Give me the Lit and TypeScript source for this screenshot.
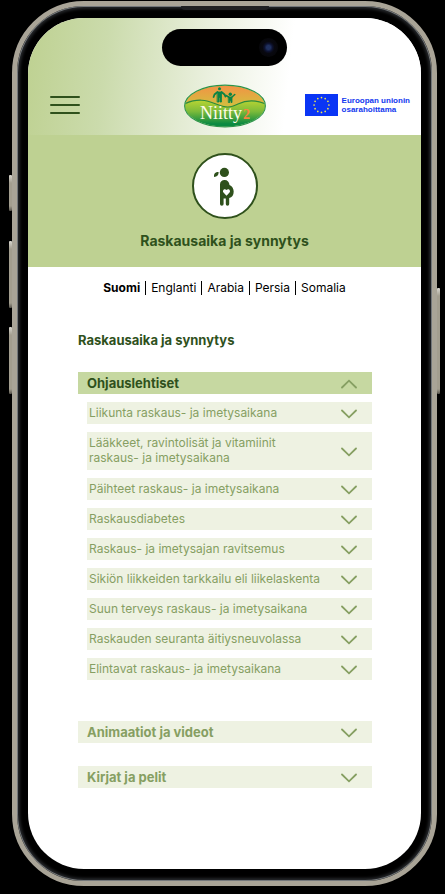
import { LitElement, html, css, svg } from "lit";
import { customElement, property, state } from "lit/decorators.js";
import { classMap } from "lit/directives/class-map.js";

@customElement("chevron-icon")
class ChevronIcon extends LitElement {
  @property({ type: Boolean }) up = false;

  static styles = css`
    :host { display: block; flex: none; width: 16px; height: 10px; }
    svg { display: block; }
    .up { transform: rotate(180deg); }
  `;

  render() {
    return html`<svg class=${classMap({ up: this.up })} width="16" height="10" viewBox="0 0 16 10" aria-hidden="true">
      <path d="M1 1.5 L8 8.3 L15 1.5" fill="none" stroke="#869f62" stroke-width="1.8" stroke-linecap="round" />
    </svg>`;
  }
}

@customElement("niitty-logo")
class NiittyLogo extends LitElement {
  static styles = css`
    :host { display: block; padding-top: 2px; }
    svg { display: block; }
    .name { font: 18px "Liberation Serif", serif; fill: #fdfbe6; }
    .two { font: bold 14px "Liberation Serif", serif; fill: #fa8540; }
  `;

  render() {
    return html`<svg width="82" height="44" viewBox="0 0 82 44" role="img" aria-label="Niitty2">
      <defs>
        <linearGradient id="sky" x1="0" y1="0" x2="0" y2="1">
          <stop offset="0" stop-color="#f58f45" />
          <stop offset="0.55" stop-color="#d9b640" />
          <stop offset="1" stop-color="#c5cf3c" />
        </linearGradient>
        <linearGradient id="grass" x1="0" y1="0" x2="0" y2="1">
          <stop offset="0" stop-color="#b9d433" />
          <stop offset="0.4" stop-color="#7dbb3a" />
          <stop offset="0.85" stop-color="#0b8a41" />
        </linearGradient>
        <clipPath id="oval"><ellipse cx="41" cy="22" rx="40" ry="20.5" /></clipPath>
      </defs>
      <g clip-path="url(#oval)">
        <rect width="82" height="32" fill="url(#sky)" />
        <path d="M0 20 C14 14 22 16 32 20 S46 24 54 20 S70 15 82 20 V44 H0 Z" fill="url(#grass)" />
        <path d="M0 20 C14 14 22 16 32 20 S46 24 54 20 S70 15 82 20" fill="none" stroke="#2c8a3c" stroke-width="1.2" />
      </g>
      <ellipse cx="41" cy="22" rx="40.4" ry="20.9" fill="none" stroke="#2d9448" stroke-width="1.1" />
      <g fill="#0c8444" stroke="#0c8444" stroke-linecap="round" stroke-linejoin="round">
        <circle cx="35.5" cy="4.8" r="1.5" stroke="none" />
        <path d="M33.5 8 H37.5 V18 H36 V13.5 H35 V18 H33.5 Z" stroke-width="0.8" />
        <path d="M33.5 8 L30.5 10.5 L29.6 13 M37.5 8 L40.5 10.5 L41.5 12.5" fill="none" stroke-width="1.8" />
        <circle cx="46.3" cy="10.2" r="1.7" stroke="none" />
        <path d="M44.7 13 H48 V18.5 H47 V16.5 H45.8 V18.5 H44.7 Z" stroke-width="0.8" />
        <path d="M44.7 13 L42 11.5 M48 13 L50.8 10.5" fill="none" stroke-width="1.5" />
      </g>
      <text class="name" x="16" y="35">Niitty</text>
      <text class="two" x="59" y="35">2</text>
    </svg>`;
  }
}

@customElement("eu-funding")
class EuFunding extends LitElement {
  static styles = css`
    :host {
      display: flex; align-items: center; gap: 4px;
      color: #1238ef; font: bold 8px/9px "Liberation Sans", Arial, sans-serif;
    }
    svg { display: block; flex: none; }
    .words { white-space: nowrap; }
  `;

  render() {
    const stars = Array.from({ length: 12 }, (_, i) => {
      const a = (i * Math.PI) / 6;
      return svg`<circle cx=${16.5 + 7.4 * Math.sin(a)} cy=${11 - 7.4 * Math.cos(a)} r="0.85" fill="#f2e94e" />`;
    });
    return html`<svg width="33" height="22" viewBox="0 0 33 22" aria-hidden="true">
        <rect width="33" height="22" fill="#0a35f5" />${stars}
      </svg>
      <span class="words">Euroopan unionin<br />osarahoittama</span>`;
  }
}

@customElement("app-root")
class AppRoot extends LitElement {
  @state() private open = "Ohjauslehtiset";

  private languages = ["Suomi", "Englanti", "Arabia", "Persia", "Somalia"];

  private sections = [
    {
      name: "Ohjauslehtiset",
      items: [
        "Liikunta raskaus- ja imetysaikana",
        "Lääkkeet, ravintolisät ja vitamiinit raskaus- ja imetysaikana",
        "Päihteet raskaus- ja imetysaikana",
        "Raskausdiabetes",
        "Raskaus- ja imetysajan ravitsemus",
        "Sikiön liikkeiden tarkkailu eli liikelaskenta",
        "Suun terveys raskaus- ja imetysaikana",
        "Raskauden seuranta äitiysneuvolassa",
        "Elintavat raskaus- ja imetysaikana",
      ],
    },
    { name: "Animaatiot ja videot", items: [] as string[] },
    { name: "Kirjat ja pelit", items: [] as string[] },
  ];

  static styles = css`
    * { box-sizing: border-box; }
    :host {
      display: block; min-height: 100vh; box-sizing: border-box;
      padding: 1px 8px 7px 12px; background: #000;
      font-family: Inter, "Noto Sans", sans-serif; color: #000;
    }
    button { border: 0; margin: 0; font: inherit; color: inherit; cursor: pointer; text-align: left; }
    h1, h2, h3, ul { margin: 0; padding: 0; }
    ul { list-style: none; }
    a { color: inherit; text-decoration: none; }

    .device {
      position: relative; padding: 12px 11px; border-radius: 72px; background: #000;
      border: 5px solid #a9a497;
      box-shadow: inset 0 0 0 1px #73777a, inset 0 0 3px 3px #25272a;
    }
    .side {
      position: absolute; width: 3px; border-radius: 1px;
      background: linear-gradient(#d9d7d0, #a39e8f 8px, #a39e8f calc(100% - 5px), #55524a);
    }
    .left { left: -8px; }
    .right { right: -8px; }
    .action { top: 169px; height: 36px; }
    .louder { top: 235px; height: 67px; }
    .quieter { top: 321px; height: 67px; }
    .power { top: 282px; height: 106px; }
    .earpiece {
      position: absolute; top: 0; left: 50%; width: 88px; height: 4px; margin-left: -44px;
      background: #202123; border-radius: 0 0 4px 4px;
    }
    .island {
      position: absolute; top: 23px; left: 50%; width: 125px; height: 37px; margin-left: -63px;
      border-radius: 20px; background: #000;
      display: flex; justify-content: flex-end; align-items: center; padding-right: 9px;
    }
    .lens {
      width: 19px; height: 19px; border-radius: 50%;
      background: radial-gradient(circle, #20305f 0 2px, #0d1230 4px, #08080f 6px, #07070b 9px);
    }
    .screen { border-radius: 56px; overflow: hidden; background: #fff; padding-bottom: 81px; }

    .top {
      display: grid; grid-template-columns: 1fr auto 1fr; align-items: center;
      height: 117px; padding: 56px 11px 0;
      background: linear-gradient(96deg, #bed191 0, #cbdbac 20%, #eaf0de 46%, #fff 66%);
    }
    .menu {
      display: flex; flex-direction: column; gap: 6px; width: 41px; padding: 0 0 0 11px; background: none;
    }
    .bar { height: 2px; border-radius: 1px; background: #2f511c; }
    .eu { justify-self: end; }

    .hero {
      display: flex; flex-direction: column; align-items: center; gap: 12px;
      padding: 18px 16px 16px; background: #bed192;
    }
    .badge { display: block; }
    .hero-title { font-size: 14px; line-height: 20px; font-weight: 700; color: #2f511c; }

    .languages {
      display: flex; justify-content: center; align-items: center; gap: 5px;
      padding-top: 12px; font-size: 12px; line-height: 18px;
    }
    .languages li { display: flex; align-items: center; gap: 5px; }
    .languages li + li::before { content: ""; width: 1px; height: 14px; background: #000; }
    .current { font-weight: 700; }

    .content { padding: 34px 49px 0 50px; }
    .title { font-size: 13px; line-height: 18px; font-weight: 700; color: #2f511c; margin-bottom: 23px; }
    .section + .section { margin-top: 23px; }
    .section.open + .section { margin-top: 41px; }
    .head, .item {
      display: flex; justify-content: space-between; align-items: center; width: 100%;
      min-height: 22px; background: #eef2e2; color: #869f62; line-height: 15px;
    }
    .head { padding: 1px 15px 0 9px; font-size: 13px; font-weight: 700; }
    .section.open .head { background: #c6d8a1; color: #2f511c; }
    .items { display: grid; gap: 8px; padding: 8px 0 0 9px; }
    .item { padding: 0 15px 2px 2px; font-size: 12px; }
    .item chevron-icon { margin-top: 4px; }
    .label { max-width: 234px; }
    .item.long { min-height: 38px; }
    .item.long .label { max-width: 200px; }
  `;

  private toggle(name: string) {
    this.open = this.open === name ? "" : name;
  }

  render() {
    return html`
      <div class="device">
        <div class="earpiece"></div>
        <div class="side left action"></div>
        <div class="side left louder"></div>
        <div class="side left quieter"></div>
        <div class="side right power"></div>
        <div class="island"><div class="lens"></div></div>
        <div class="screen">
          <header class="top">
            <button class="menu" aria-label="Valikko">
              <span class="bar"></span><span class="bar"></span><span class="bar"></span>
            </button>
            <niitty-logo></niitty-logo>
            <eu-funding class="eu"></eu-funding>
          </header>

          <section class="hero">
            <svg class="badge" width="66" height="66" viewBox="0 0 66 66" aria-hidden="true">
              <circle cx="33" cy="33" r="32" fill="#fff" stroke="#2f511c" stroke-width="2" />
              <g fill="#2f511c">
                <circle cx="32.4" cy="19.4" r="4.6" />
                <path d="M22 23.9 C21.6 21 23.2 19 26.6 19 C26.8 22 25.3 23.8 22 23.9 Z" />
                <path d="M28 31.5 C28 28.5 30 27 32.6 27 C35.5 27 37.3 29 37.5 32 C40 33 41.7 35.6 41.7 38.6 C41.7 42.2 40 44.6 37.2 45 V51 A1.7 1.7 0 0 1 33.8 51 V45.4 H31.6 V51 A1.8 1.8 0 0 1 28 51 Z" />
              </g>
              <path d="M34.5 42.7 L31.5 39.6 C29.8 37.5 32.5 34.8 34.5 37 C36.5 34.8 39.2 37.5 37.5 39.6 Z" fill="#fff" />
            </svg>
            <h1 class="hero-title">Raskausaika ja synnytys</h1>
          </section>

          <nav aria-label="Kieli">
            <ul class="languages">
              ${this.languages.map(
                (l, i) => html`<li><a href="#" class=${classMap({ current: i === 0 })}>${l}</a></li>`
              )}
            </ul>
          </nav>

          <main class="content">
            <h2 class="title">Raskausaika ja synnytys</h2>
            ${this.sections.map((s) => {
              const open = s.name === this.open;
              return html`<section class=${classMap({ section: true, open })}>
                <h3>
                  <button class="head" aria-expanded=${open} @click=${() => this.toggle(s.name)}>
                    ${s.name}<chevron-icon ?up=${open}></chevron-icon>
                  </button>
                </h3>
                ${open
                  ? html`<ul class="items">
                      ${s.items.map(
                        (t) => html`<li>
                          <button class=${classMap({ item: true, long: t.length > 50 })} aria-expanded="false">
                            <span class="label">${t}</span>
                            <chevron-icon></chevron-icon>
                          </button>
                        </li>`
                      )}
                    </ul>`
                  : ""}
              </section>`;
            })}
          </main>
        </div>
      </div>
    `;
  }
}
